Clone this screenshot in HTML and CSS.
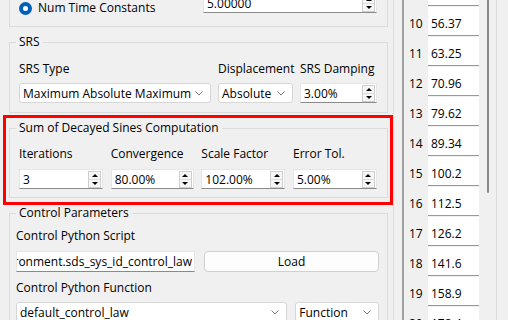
FILE: index.html
```html
<!DOCTYPE html>
<html lang="en">
<head>
    <meta charset="UTF-8">
    <meta name="viewport" content="width=device-width, initial-scale=1.0">
    <title>SDS System Identification</title>
    <link rel="stylesheet" href="styles.css">
</head>
<body>
    <div class="window">
        <div class="left-pane">
            <div class="group group-top">
                <div class="radio-row">
                    <span class="radio"></span>
                    <span class="radio-label">Num Time Constants</span>
                    <div class="spin spin-top">
                        <span class="spin-text">5.00000</span>
                        <span class="spin-btns"><span class="arrow-up"></span><span class="arrow-down"></span></span>
                    </div>
                </div>
            </div>

            <fieldset class="group">
                <legend>SRS</legend>
                <div class="srs-grid">
                    <label>SRS Type</label>
                    <label>Displacement</label>
                    <label>SRS Damping</label>
                    <div class="combo">
                        <span>Maximum Absolute Maximum</span>
                        <svg class="chevron" width="8" height="5" viewBox="0 0 8 5"><path d="M0.5 0.5 L4 4 L7.5 0.5" fill="none" stroke="#7a7a7a" stroke-width="1"/></svg>
                    </div>
                    <div class="combo">
                        <span>Absolute</span>
                        <svg class="chevron" width="8" height="5" viewBox="0 0 8 5"><path d="M0.5 0.5 L4 4 L7.5 0.5" fill="none" stroke="#7a7a7a" stroke-width="1"/></svg>
                    </div>
                    <div class="spin">
                        <span class="spin-text">3.00%</span>
                        <span class="spin-btns"><span class="arrow-up"></span><span class="arrow-down"></span></span>
                    </div>
                </div>
            </fieldset>

            <fieldset class="group">
                <legend>Sum of Decayed Sines Computation</legend>
                <div class="sds-grid">
                    <label>Iterations</label>
                    <label>Convergence</label>
                    <label>Scale Factor</label>
                    <label>Error Tol.</label>
                    <div class="spin">
                        <span class="spin-text">3</span>
                        <span class="spin-btns"><span class="arrow-up"></span><span class="arrow-down"></span></span>
                    </div>
                    <div class="spin">
                        <span class="spin-text">80.00%</span>
                        <span class="spin-btns"><span class="arrow-up"></span><span class="arrow-down"></span></span>
                    </div>
                    <div class="spin">
                        <span class="spin-text">102.00%</span>
                        <span class="spin-btns"><span class="arrow-up"></span><span class="arrow-down"></span></span>
                    </div>
                    <div class="spin">
                        <span class="spin-text">5.00%</span>
                        <span class="spin-btns"><span class="arrow-up"></span><span class="arrow-down"></span></span>
                    </div>
                </div>
            </fieldset>

            <fieldset class="group">
                <legend>Control Parameters</legend>
                <div class="cp-body">
                    <label>Control Python Script</label>
                    <div class="cp-row script-row">
                        <div class="line-edit"><span>sds_environment.sds_sys_id_control_law</span></div>
                        <button class="load-btn">Load</button>
                    </div>
                    <label class="second-label">Control Python Function</label>
                    <div class="cp-row function-row">
                        <div class="combo">
                            <span>default_control_law</span>
                            <svg class="chevron" width="8" height="5" viewBox="0 0 8 5"><path d="M0.5 0.5 L4 4 L7.5 0.5" fill="none" stroke="#7a7a7a" stroke-width="1"/></svg>
                        </div>
                        <div class="combo">
                            <span>Function</span>
                            <svg class="chevron" width="8" height="5" viewBox="0 0 8 5"><path d="M0.5 0.5 L4 4 L7.5 0.5" fill="none" stroke="#7a7a7a" stroke-width="1"/></svg>
                        </div>
                    </div>
                </div>
            </fieldset>
        </div>

        <div class="table-pane">
            <div class="rows">
                <div class="row"><span class="row-num">9</span><span class="cell">50.22</span></div>
                <div class="row"><span class="row-num">10</span><span class="cell">56.37</span></div>
                <div class="row"><span class="row-num">11</span><span class="cell">63.25</span></div>
                <div class="row"><span class="row-num">12</span><span class="cell">70.96</span></div>
                <div class="row"><span class="row-num">13</span><span class="cell">79.62</span></div>
                <div class="row"><span class="row-num">14</span><span class="cell">89.34</span></div>
                <div class="row"><span class="row-num">15</span><span class="cell">100.2</span></div>
                <div class="row"><span class="row-num">16</span><span class="cell">112.5</span></div>
                <div class="row"><span class="row-num">17</span><span class="cell">126.2</span></div>
                <div class="row"><span class="row-num">18</span><span class="cell">141.6</span></div>
                <div class="row"><span class="row-num">19</span><span class="cell">158.9</span></div>
                <div class="row"><span class="row-num">20</span><span class="cell">178.4</span></div>
            </div>
            <div class="thumb"></div>
        </div>

        <!-- highlight box drawn over the screenshot -->
        <div class="red-mark"></div>
    </div>
</body>
</html>
```

FILE: styles.css
```css
body {
    margin: 0;
    background-color: #f0f0f0;
    font-family: "Open Sans", "Noto Sans", sans-serif;
    font-size: 12px;
    color: #000;
}
.window {
    position: relative;
    display: flex;
    width: 508px;
    height: 320px;
    overflow: hidden;
}
.left-pane {
    flex: none;
    width: 394px;
    box-sizing: border-box;
    border-right: 1px solid #dcdcdc;
    padding: 0 5px 0 9px;
}
.group {
    margin: 7px 0 0;
    padding: 0;
    border: 1px solid #dcdcdc;
    min-width: 0;
}
.group legend {
    margin-left: 6px;
    padding: 0 3px;
    line-height: 16px;
}
label {
    display: block;
    line-height: 16px;
    white-space: nowrap;
}
.group-top {
    margin-top: -20px;
    height: 47px;
    box-sizing: border-box;
    padding: 12px 10px 0 9px;
}
.radio-row {
    display: flex;
    align-items: flex-start;
}
.radio {
    display: flex;
    align-items: center;
    justify-content: center;
    width: 13px;
    height: 13px;
    margin-top: 9px;
    border-radius: 50%;
    background-color: #005fb8;
}
.radio::after {
    content: "";
    width: 5px;
    height: 5px;
    border-radius: 50%;
    background-color: #fff;
}
.radio-label {
    margin: 7px 0 0 6px;
    line-height: 16px;
}
.spin-top {
    margin-left: auto;
    width: 174px;
}
.spin {
    display: flex;
    align-items: center;
    height: 20px;
    box-sizing: border-box;
    background-color: #fff;
    border: 1px solid #e6e6e6;
    border-bottom-color: #8a8a8a;
    padding-left: 3px;
}
.spin-text {
    flex: 1;
    white-space: nowrap;
    overflow: hidden;
}
.spin-btns {
    display: flex;
    flex-direction: column;
    width: 13px;
    height: 17px;
    margin-right: 1px;
    box-sizing: border-box;
    border: 1px solid #cfcfcf;
    background-color: #f6f6f6;
}
.spin-btns span {
    flex: 1;
    display: flex;
    align-items: center;
    justify-content: center;
}
.arrow-up::after {
    content: "";
    border-left: 3px solid transparent;
    border-right: 3px solid transparent;
    border-bottom: 3px solid #000;
}
.arrow-down {
    border-top: 1px solid #dcdcdc;
}
.arrow-down::after {
    content: "";
    border-left: 3px solid transparent;
    border-right: 3px solid transparent;
    border-top: 3px solid #000;
}
.combo {
    display: flex;
    align-items: center;
    height: 20px;
    box-sizing: border-box;
    background-color: #fff;
    border: 1px solid #d6d6d6;
    border-radius: 3px;
    padding: 0 7px 0 3px;
    white-space: nowrap;
    overflow: hidden;
}
.combo span {
    flex: 1;
    overflow: hidden;
}
.chevron {
    flex: none;
    margin-left: 4px;
}
.srs-grid {
    display: grid;
    grid-template-columns: 192px 75px 77px;
    column-gap: 7px;
    row-gap: 6px;
    padding: 11px 10px 9px 9px;
}
.sds-grid {
    display: grid;
    grid-template-columns: 84px 83px 84px 84px;
    justify-content: space-between;
    row-gap: 7px;
    padding: 10px 10px 8px 9px;
}
.cp-body {
    display: flex;
    flex-direction: column;
    padding: 7px 8px 0 6px;
}
.cp-row {
    display: flex;
    margin-top: 7px;
}
.script-row {
    gap: 9px;
}
.line-edit {
    display: flex;
    justify-content: flex-end;
    width: 179px;
    height: 21px;
    box-sizing: border-box;
    background-color: #fff;
    border: 1px solid #e6e6e6;
    border-bottom-color: #8a8a8a;
    padding-right: 2px;
    line-height: 19px;
    white-space: nowrap;
    overflow: hidden;
}
.load-btn {
    width: 175px;
    height: 21px;
    background-color: #fdfdfd;
    border: 1px solid #d0d0d0;
    border-radius: 4px;
    font-family: inherit;
    font-size: 12px;
    color: #000;
    padding: 0;
}
.second-label {
    margin-top: 8px;
}
.function-row {
    gap: 8px;
    margin-top: 6px;
}
.function-row .combo {
    height: 21px;
}
.function-row .combo:first-child {
    width: 272px;
}
.function-row .combo:last-child {
    width: 84px;
}
.table-pane {
    display: flex;
    flex: none;
    width: 95px;
    margin-left: 8px;
    box-sizing: border-box;
    border-left: 2px solid #a0a0a0;
    border-right: 1px solid #dadada;
}
.rows {
    margin-top: -23px;
    padding-left: 5px;
}
.row {
    display: flex;
    height: 29px;
    margin-bottom: 1px;
}
.row-num {
    width: 19px;
    padding-top: 9px;
    line-height: 16px;
}
.cell {
    width: 51px;
    box-sizing: border-box;
    background-color: #fff;
    border-bottom: 1px solid #999;
    padding: 9px 0 0 3px;
    line-height: 16px;
}
.thumb {
    flex: none;
    width: 2px;
    height: 203px;
    margin: -10px 0 0 8px;
    border-radius: 1px;
    background-color: #8a8a8a;
}
.red-mark {
    position: absolute;
    left: 3px;
    top: 115px;
    width: 390px;
    height: 90px;
    box-sizing: border-box;
    border: 3px solid #ff0000;
    pointer-events: none;
}
```
